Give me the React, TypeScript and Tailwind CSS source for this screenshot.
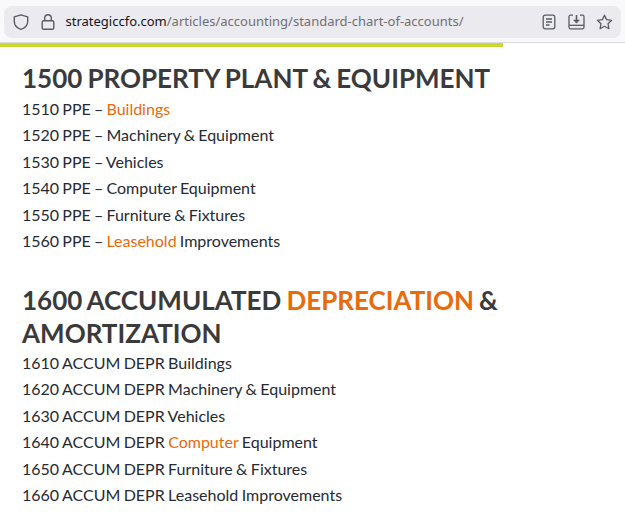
import React from 'react';

const O = ({ children }: { children: React.ReactNode }) => <span className="text-[#ea6a0a]">{children}</span>;

const Row = ({ children }: { children: React.ReactNode }) => <p className="h-[26.4px] leading-[26.4px]">{children}</p>;

const App = () => {
  return (
    <div className="h-[524px] w-[625px] overflow-hidden bg-white font-['Lato',sans-serif]">
      <div className="h-[43px] border-b border-[#dcdcdf] bg-[#f9f9fb] px-1 pt-[6px]">
        <div className="flex h-[32px] items-center rounded-lg bg-[#ebebef] pl-2 pr-[8px]">
          <svg width="18" height="18" viewBox="0 0 18 18" fill="none" stroke="#5b5b66" strokeWidth="1.4" className="ml-[-0.5px]">
            <path d="M9 1.8 L2.3 3.8 V8.5 C2.3 12.5 5.2 15 9 16.3 C12.8 15 15.7 12.5 15.7 8.5 V3.8 Z" strokeLinejoin="round" />
          </svg>
          <svg width="16" height="18" viewBox="0 0 16 18" fill="none" stroke="#5b5b66" strokeWidth="1.4" className="ml-[10px]">
            <rect x="2.2" y="7.7" width="11.6" height="8.6" rx="1.6" />
            <path d="M4.7 7.7 V5 a3.3 3.3 0 0 1 6.6 0 V7.7" />
          </svg>
          <span className="ml-[10px] font-['Noto_Sans',sans-serif] text-[13px] text-[#15141a]">
            strategiccfo.com<span className="text-[#6f6f78]">/articles/accounting/standard-chart-of-accounts/</span>
          </span>
          <div className="ml-auto flex items-center">
            <svg width="14" height="16" viewBox="0 0 14 16" fill="none" stroke="#5b5b66" strokeWidth="1.3">
              <rect x="1.2" y="1.2" width="11.6" height="13.6" rx="2" />
              <path d="M4 5h6M4 8h6M4 11h3.5" />
            </svg>
            <svg width="17" height="16" viewBox="0 0 17 16" fill="none" stroke="#5b5b66" strokeWidth="1.3" className="ml-[12px]">
              <path d="M5 1.2H2.5A1.5 1.5 0 0 0 1 2.7V13.3A1.5 1.5 0 0 0 2.5 14.8H14.5A1.5 1.5 0 0 0 16 13.3V2.7A1.5 1.5 0 0 0 14.5 1.2H12" />
              <path d="M1 11.3H16" />
              <path d="M8.5 1V8" strokeWidth="1.6" />
              <path d="M5.6 6H11.4L8.5 9.2Z" fill="#5b5b66" strokeWidth="0.6" />
            </svg>
            <svg width="17" height="16" viewBox="0 0 17 16" fill="none" stroke="#5b5b66" strokeWidth="1.3" strokeLinejoin="round" className="ml-[11px]">
              <path d="M8.5 1.2 L10.6 5.6 L15.6 6.3 L12 9.7 L12.9 14.7 L8.5 12.3 L4.1 14.7 L5 9.7 L1.4 6.3 L6.4 5.6 Z" />
            </svg>
          </div>
        </div>
      </div>
      <div className="h-1 w-[503px] bg-[#c6d935]" />
      <div className="w-[503px] pl-[22px] text-[16px] text-[#252a34] [word-spacing:-0.7px]">
        <h2 className="mt-[15px] mb-[1px] text-[26px] font-bold leading-[33px] text-[#3a3a3c] [word-spacing:-1.2px]">1500 PROPERTY PLANT &amp; EQUIPMENT</h2>
        <div className="[word-spacing:-0.9px]">
          <Row>1510 PPE – <O>Buildings</O></Row>
          <Row>1520 PPE – Machinery &amp; Equipment</Row>
          <Row>1530 PPE – Vehicles</Row>
          <Row>1540 PPE – Computer Equipment</Row>
          <Row>1550 PPE – Furniture &amp; Fixtures</Row>
          <Row>1560 PPE – <O>Leasehold</O> Improvements</Row>
        </div>
        <h2 className="mt-[29.3px] mb-[0.4px] text-[26px] font-bold leading-[33px] text-[#3a3a3c] [word-spacing:-1.2px]">
          1600 ACCUMULATED <O>DEPRECIATION</O> &amp; AMORTIZATION
        </h2>
        <Row>1610 ACCUM DEPR Buildings</Row>
        <Row>1620 ACCUM DEPR Machinery &amp; Equipment</Row>
        <Row>1630 ACCUM DEPR Vehicles</Row>
        <Row>1640 ACCUM DEPR <O>Computer</O> Equipment</Row>
        <Row>1650 ACCUM DEPR Furniture &amp; Fixtures</Row>
        <Row>1660 ACCUM DEPR Leasehold Improvements</Row>
      </div>
    </div>
  );
};

export default App;
